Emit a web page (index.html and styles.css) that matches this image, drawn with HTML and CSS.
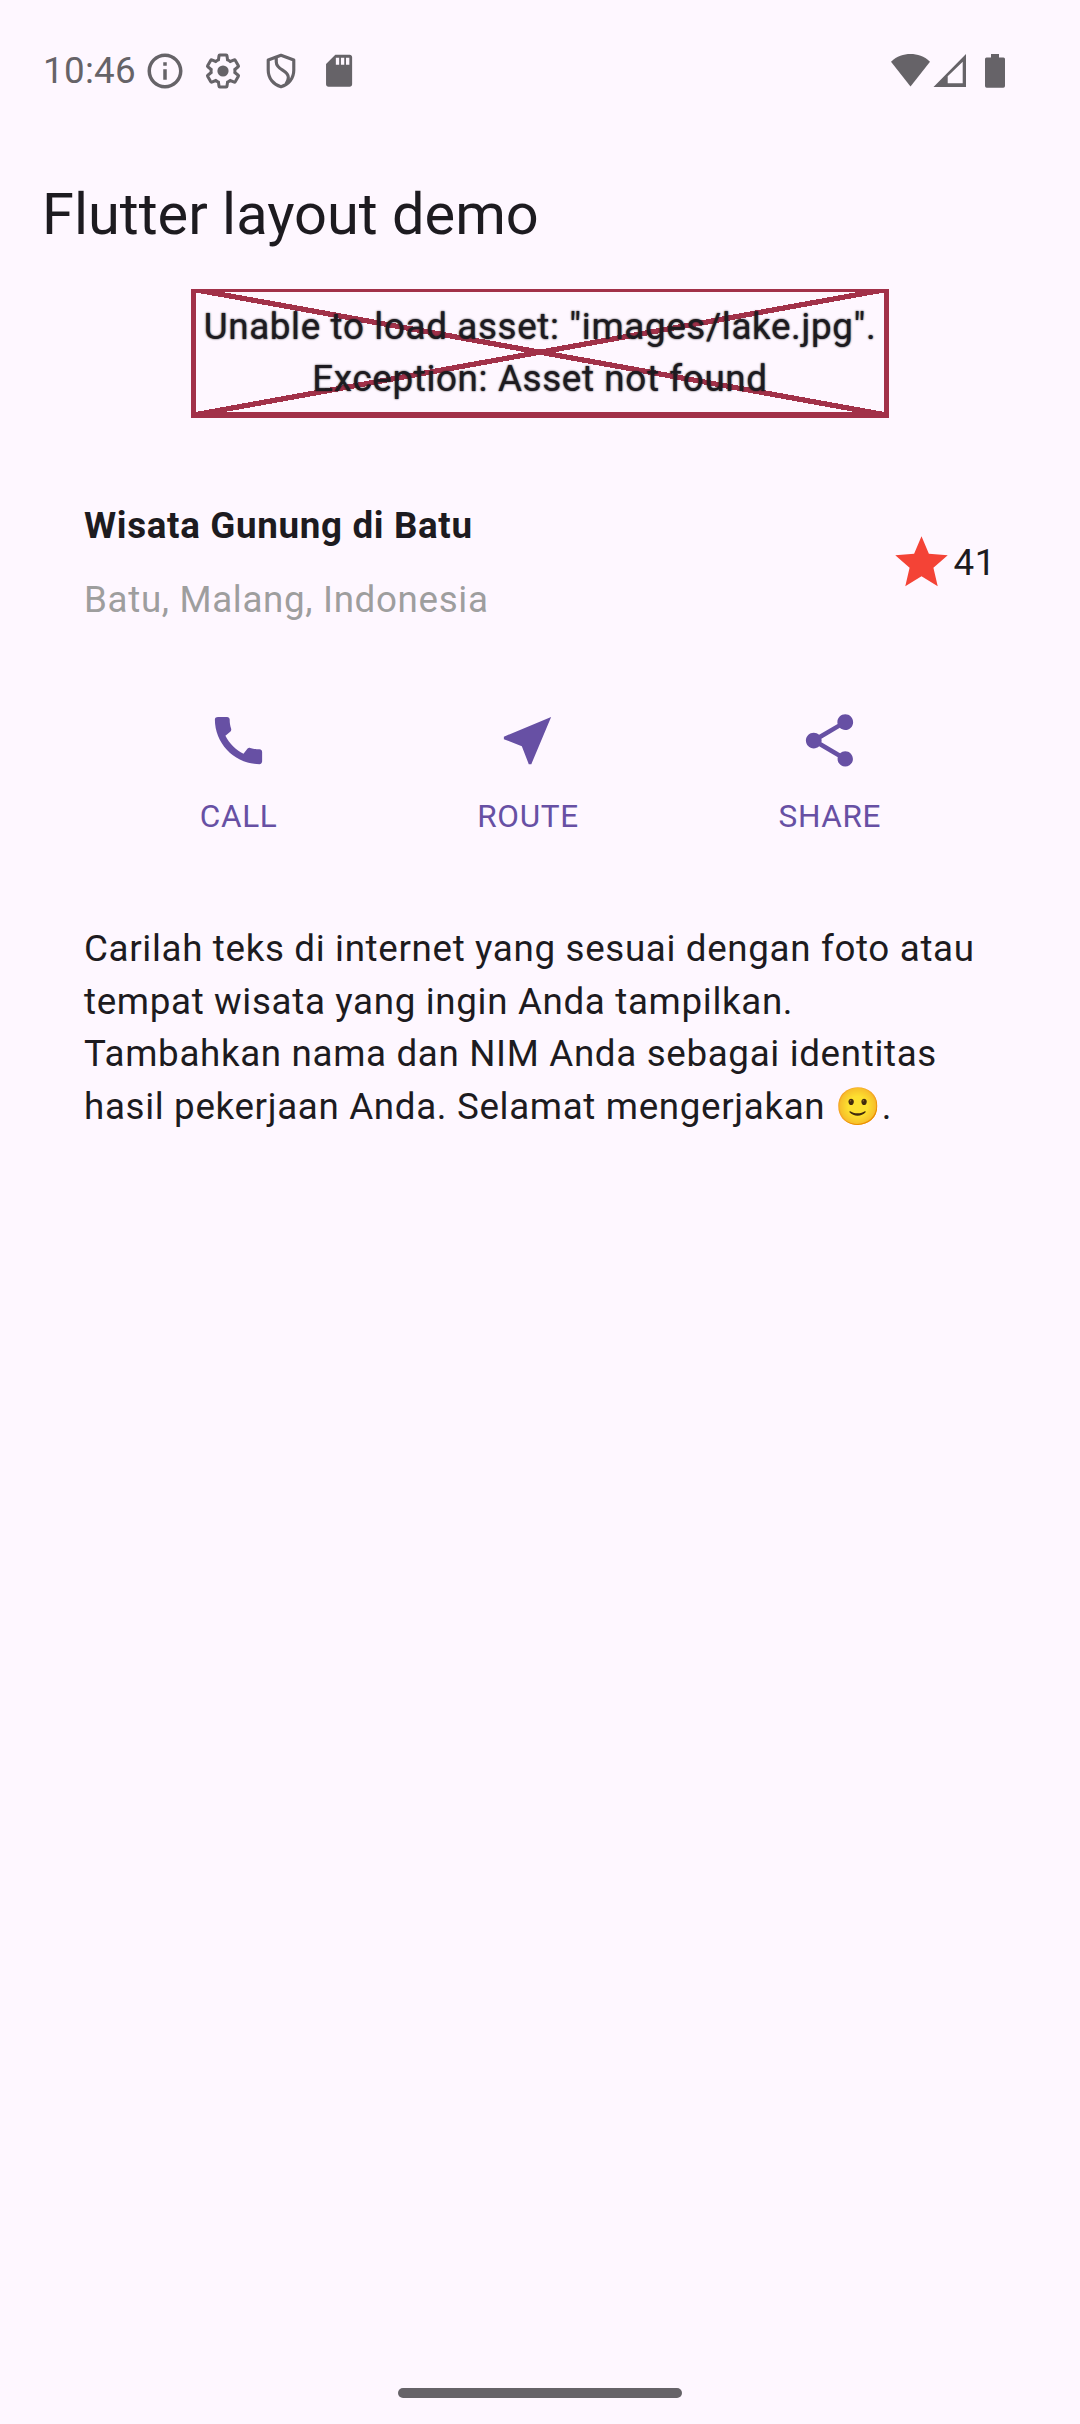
FILE: index.html
```html
<!DOCTYPE html>
<html lang="id">
<head>
<meta charset="utf-8">
<title>Flutter layout demo</title>
<link rel="stylesheet" href="styles.css">
</head>
<body>
<div class="screen">
  <header class="status">
    <span class="clock">10:46</span>
    <div class="status-icons">
      <svg viewBox="0 0 24 24"><path d="M11 7h2v2h-2zm0 4h2v6h-2zm1-9C6.480 2 2 6.480 2 12s4.480 10 10 10 10-4.480 10-10S17.520 2 12 2zm0 18c-4.410 0-8-3.590-8-8s3.590-8 8-8 8 3.590 8 8-3.590 8-8 8z"/></svg>
      <svg viewBox="0 0 24 24"><path class="gear" transform="translate(1.080 1.080) scale(.91)" d="M19.430 12.980c.04-.32.07-.64.07-.98 0-.34-.03-.66-.07-.98l2.110-1.650c.19-.15.24-.42.12-.64l-2-3.460c-.09-.16-.26-.25-.44-.25-.06 0-.12.01-.17.03l-2.490 1c-.52-.4-1.080-.73-1.690-.98l-.38-2.650C14.460 2.180 14.250 2 14 2h-4c-.25 0-.46.18-.49.42l-.38 2.650c-.61.25-1.170.59-1.690.98l-2.490-1c-.06-.02-.12-.03-.18-.03-.17 0-.34.09-.43.25l-2 3.460c-.13.22-.07.49.12.64l2.110 1.650c-.04.32-.07.65-.07.98 0 .33.03.66.07.98l-2.110 1.650c-.19.15-.24.42-.12.64l2 3.460c.09.16.26.25.44.25.06 0 .12-.01.17-.03l2.490-1c.52.4 1.080.73 1.690.98l.38 2.650c.03.24.24.42.49.42h4c.25 0 .46-.18.49-.42l.38-2.650c.61-.25 1.170-.59 1.690-.98l2.490 1c.06.02.12.03.18.03.17 0 .34-.09.43-.25l2-3.460c.12-.22.07-.49-.12-.64l-2.110-1.650z"/><circle cx="12" cy="12" r="3.200"/></svg>
      <svg viewBox="0 0 24 24"><path class="line" d="M12 3L4.700 5.700V11.500c0 4.600 3 8.300 7.300 9.500 4.300-1.200 7.300-4.900 7.300-9.500V5.700zM9.300 4.200v2.600c0 4.700 7 4.700 6.900 8.900 0 1.300-.5 2.300-1.300 3.600"/></svg>
      <svg viewBox="0 0 24 24"><path fill-rule="evenodd" d="M18.100 2.700H9.900L4.600 8v11.600c0 .8.600 1.400 1.400 1.400h12.100c.8 0 1.400-.6 1.400-1.400V4.100c0-.8-.6-1.400-1.400-1.400zM10.200 4.400h1.900v4h-1.900zM13.100 4.400h1.900v4h-1.900zM16 4.400h1.900v4H16z"/></svg>
    </div>
    <svg class="signals" viewBox="0 0 116 36"><path d="M20.500 33.500L1 8.700C7 3 13.500 1 20.500 1S34 3 40 8.700z"/><path fill-rule="evenodd" d="M43.500 34L76 1v33zM57.700 23.300v7h15V8.700z"/><path d="M101 1h8v3.500h4.500a1.500 1.500 0 0 1 1.500 1.500v27a1.700 1.700 0 0 1-1.700 1.700H96.700A1.700 1.700 0 0 1 95 33V6a1.500 1.500 0 0 1 1.500-1.500h4.500z"/></svg>
  </header>

  <h1 class="app-title">Flutter layout demo</h1>

  <div class="asset-error">
    <svg class="cross" viewBox="0 0 698 129" shape-rendering="crispEdges"><path d="M2.500 .4H695.500V126H2.500zM2.500 .4L695.500 126M695.500 .4L2.500 126"/></svg>
    <p class="asset-message">Unable to load asset: "images/lake.jpg".<br>Exception: Asset not found</p>
  </div>

  <section class="title-section">
    <div>
      <h2 class="place">Wisata Gunung di Batu</h2>
      <p class="location">Batu, Malang, Indonesia</p>
    </div>
    <div class="rating">
      <svg class="icon" viewBox="0 0 24 24"><path d="M12 17.270L18.180 21l-1.640-7.030L22 9.240l-7.190-.61L12 2 9.190 8.630 2 9.240l5.460 4.730L5.820 21z"/></svg>
      <span>41</span>
    </div>
  </section>

  <nav class="buttons">
    <div class="button">
      <svg class="icon" viewBox="0 0 24 24"><path d="M20.010 15.380c-1.230 0-2.420-.2-3.530-.56-.35-.12-.74-.03-1.010.24l-1.570 1.970c-2.830-1.350-5.480-3.900-6.890-6.830l1.950-1.660c.27-.28.35-.67.24-1.020-.37-1.110-.56-2.300-.56-3.530 0-.54-.45-.99-.99-.99H4.190C3.650 3 3 3.240 3 3.990 3 13.280 10.730 21 20.010 21c.71 0 .99-.63.99-1.180v-3.450c0-.54-.45-.99-.99-.99z"/></svg>
      <span>CALL</span>
    </div>
    <div class="button">
      <svg class="icon" viewBox="0 0 24 24"><path d="M21 3L3 10.530v.98l6.840 2.650L12.480 21h.98L21 3z"/></svg>
      <span>ROUTE</span>
    </div>
    <div class="button">
      <svg class="icon" viewBox="0 0 24 24"><path d="M18 16.080c-.76 0-1.440.3-1.960.77L8.910 12.700c.05-.23.09-.46.09-.7s-.04-.47-.09-.7l7.050-4.110c.54.5 1.250.81 2.040.81 1.660 0 3-1.340 3-3s-1.340-3-3-3-3 1.340-3 3c0 .24.04.47.09.7L8.040 9.810C7.500 9.310 6.790 9 6 9c-1.660 0-3 1.340-3 3s1.340 3 3 3c.79 0 1.500-.31 2.040-.81l7.120 4.160c-.05.21-.08.43-.08.65 0 1.610 1.310 2.920 2.920 2.920 1.610 0 2.920-1.310 2.920-2.920s-1.310-2.920-2.920-2.920z"/></svg>
      <span>SHARE</span>
    </div>
  </nav>

  <p class="description">Carilah teks di internet yang sesuai dengan foto atau tempat wisata yang ingin Anda tampilkan.<br>Tambahkan nama dan NIM Anda sebagai identitas hasil pekerjaan Anda. Selamat mengerjakan 🙂.</p>

  <div class="home-bar"></div>
</div>
</body>
</html>
```
FILE: styles.css
```css
* { box-sizing: border-box; margin: 0; padding: 0; }

body {
  background: #fef7ff;
  color: #1d1b20;
  font: 400 36.75px/52.5px Roboto, "Noto Sans", sans-serif;
  letter-spacing: 0.656px;
}

svg { display: block; fill: currentColor; }

.screen {
  display: flex;
  flex-direction: column;
  width: 1080px;
  height: 2424px;
}

.status {
  display: flex;
  align-items: center;
  height: 141px;
  padding: 0 74px 0 43px;
  color: #666368;
}

.clock { width: 101px; padding-top: 1px; letter-spacing: 0.3px; }
.status-icons { display: flex; gap: 16px; }
.status-icons svg { width: 42px; height: 42px; }
.gear { fill: none; stroke: currentColor; stroke-width: 1.9; }
.line { fill: none; stroke: currentColor; stroke-width: 1.8; stroke-linejoin: round; }
.signals { width: 116px; height: 36px; margin-left: auto; }

.app-title {
  height: 148px;
  padding-left: 42px;
  font-size: 57.75px;
  font-weight: 400;
  line-height: 147px;
  letter-spacing: 0;
}

.asset-error {
  position: relative;
  align-self: center;
  width: 698px;
  height: 127px;
  padding-top: 11.5px;
  text-align: center;
}

.cross {
  position: absolute;
  top: 0;
  left: 0;
  width: 698px;
  height: 129px;
}

.cross path { fill: none; stroke: #a23149; stroke-width: 5.25; }

.asset-message { position: relative; text-shadow: 0 0 2px #1d1b20; }

.title-section {
  display: flex;
  align-items: center;
  justify-content: space-between;
  padding: 84px;
}

.place { margin-bottom: 21px; font-size: inherit; font-weight: 700; }
.location { color: #9e9e9e; }
.rating { display: flex; align-items: center; }
.icon { width: 63px; height: 63px; }
.rating .icon { margin-bottom: 1px; color: #f44336; }

.buttons { display: flex; justify-content: space-evenly; color: #6750a4; }

.button {
  display: flex;
  flex-direction: column;
  align-items: center;
  gap: 22px;
  margin-top: -1px;
  font-size: 31.5px;
  line-height: 45px;
}

.button span { padding-left: 1px; }

.description { padding: 84px; }

.home-bar {
  align-self: center;
  width: 284px;
  height: 10px;
  margin: auto 0 26px;
  border-radius: 5px;
  background: #666368;
}
```
